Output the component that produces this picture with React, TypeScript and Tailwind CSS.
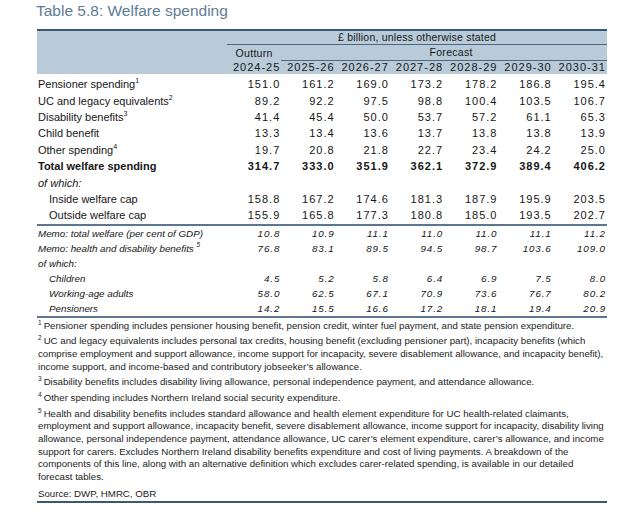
import React from "react";

type Row = { label: string; sup?: string; vals: string[]; bold?: boolean; indent?: boolean; italic?: boolean };

const main: Row[] = [
  { label: "Pensioner spending", sup: "1", vals: ["151.0", "161.2", "169.0", "173.2", "178.2", "186.8", "195.4"] },
  { label: "UC and legacy equivalents", sup: "2", vals: ["89.2", "92.2", "97.5", "98.8", "100.4", "103.5", "106.7"] },
  { label: "Disability benefits", sup: "3", vals: ["41.4", "45.4", "50.0", "53.7", "57.2", "61.1", "65.3"] },
  { label: "Child benefit", vals: ["13.3", "13.4", "13.6", "13.7", "13.8", "13.8", "13.9"] },
  { label: "Other spending", sup: "4", vals: ["19.7", "20.8", "21.8", "22.7", "23.4", "24.2", "25.0"] },
  { label: "Total welfare spending", bold: true, vals: ["314.7", "333.0", "351.9", "362.1", "372.9", "389.4", "406.2"] },
  { label: "of which:", italic: true, vals: [] },
  { label: "Inside welfare cap", indent: true, vals: ["158.8", "167.2", "174.6", "181.3", "187.9", "195.9", "203.5"] },
  { label: "Outside welfare cap", indent: true, vals: ["155.9", "165.8", "177.3", "180.8", "185.0", "193.5", "202.7"] },
];

const memo: Row[] = [
  { label: "Memo: total welfare (per cent of GDP)", vals: ["10.8", "10.9", "11.1", "11.0", "11.0", "11.1", "11.2"] },
  { label: "Memo: health and disability benefits ", sup: "5", vals: ["76.8", "83.1", "89.5", "94.5", "98.7", "103.6", "109.0"] },
  { label: "of which:", vals: [] },
  { label: "Children", indent: true, vals: ["4.5", "5.2", "5.8", "6.4", "6.9", "7.5", "8.0"] },
  { label: "Working-age adults", indent: true, vals: ["58.0", "62.5", "67.1", "70.9", "73.6", "76.7", "80.2"] },
  { label: "Pensioners", indent: true, vals: ["14.2", "15.5", "16.6", "17.2", "18.1", "19.4", "20.9"] },
];

const years = ["2024-25", "2025-26", "2026-27", "2027-28", "2028-29", "2029-30", "2030-31"];

const grid = "grid grid-cols-[190px_repeat(7,minmax(0,1fr))]";

function Fn({ n, lines }: { n: string; lines: string[] }) {
  return (
    <div className="mb-[3px]">
      {lines.map((l, i) => (
        <div key={i} className="whitespace-nowrap h-[12.7px] leading-[12.7px]">
          {i === 0 && <sup className="text-[6.5px] top-[-0.6em] mr-[2px]">{n}</sup>}
          {l}
        </div>
      ))}
    </div>
  );
}

export default function App() {
  return (
    <div className="w-[634px] h-[517px] bg-white overflow-hidden font-['Liberation_Sans',Arial,sans-serif] text-[#161616]">
      <div className="pl-[36px] pt-[1px] h-[29px] text-[15.5px] leading-[20px] text-[#5f7c95]">Table 5.8: Welfare spending</div>
      <div className="ml-[37px] w-[570px]">
        {/* header */}
        <div className="border-t-2 border-[#3b5871] bg-[#b9cad8]">
          <div className={grid}>
            <div />
            <div className="col-span-7 h-[14px] border-b border-[#4b6883] text-center text-[10.5px] leading-[13px] tracking-[0.2px]">
              £ billion, unless otherwise stated
            </div>
          </div>
          <div className={grid}>
            <div />
            <div className="h-[16px] text-center text-[10.5px] leading-[16px] tracking-[0.3px]">Outturn</div>
            <div className="col-span-6 h-[16px] border-b border-[#4b6883] text-center text-[10.5px] leading-[15px] pl-[14px] tracking-[0.3px]">
              Forecast
            </div>
          </div>
          <div className={grid}>
            <div />
            {years.map((y) => (
              <div key={y} className="h-[13px] text-right text-[11px] leading-[12px] tracking-[1px] pr-[1px]">
                {y}
              </div>
            ))}
          </div>
        </div>
        {/* main body */}
        <div className="pt-[2px]">
          {main.map((r, i) => (
            <div key={i} className={`${grid} h-[16.4px] items-center text-[11px] leading-[16px] ${r.bold ? "font-bold" : ""}`}>
              <div className={`${r.indent ? "pl-[12px]" : "pl-[1px]"} ${r.italic ? "italic" : ""} whitespace-nowrap`}>
                {r.label}
                {r.sup && <sup className="text-[7px] top-[-0.7em]">{r.sup}</sup>}
              </div>
              {r.vals.map((v, j) => (
                <div key={j} className="text-right tracking-[1px] pr-[1px]">
                  {v}
                </div>
              ))}
            </div>
          ))}
        </div>
        <div className="h-[2px] bg-[#5a7690]" />
        {/* memo */}
        <div>
          {memo.map((r, i) => (
            <div key={i} className={`${grid} h-[15px] items-center text-[9.8px] leading-[15px] italic`}>
              <div className={`${r.indent ? "pl-[12px]" : "pl-[1px]"} whitespace-nowrap`}>
                {r.label}
                {r.sup && <sup className="text-[6.5px] top-[-0.7em]">{r.sup}</sup>}
              </div>
              {r.vals.map((v, j) => (
                <div key={j} className="text-right tracking-[0.9px] pr-[1px]">
                  {v}
                </div>
              ))}
            </div>
          ))}
        </div>
        <div className="h-[2px] bg-[#5a7690]" />
        {/* footnotes */}
        <div className="pt-[2px] pl-[1px] text-[9.7px] text-[#1c1c1c]">
          <Fn n="1" lines={["Pensioner spending includes pensioner housing benefit, pension credit, winter fuel payment, and state pension expenditure."]} />
          <Fn
            n="2"
            lines={[
              "UC and legacy equivalents includes personal tax credits, housing benefit (excluding pensioner part), incapacity benefits (which",
              "comprise employment and support allowance, income support for incapacity, severe disablement allowance, and incapacity benefit),",
              "income support, and income-based and contributory jobseeker’s allowance.",
            ]}
          />
          <Fn n="3" lines={["Disability benefits includes disability living allowance, personal independence payment, and attendance allowance."]} />
          <Fn n="4" lines={["Other spending includes Northern Ireland social security expenditure."]} />
          <Fn
            n="5"
            lines={[
              "Health and disability benefits includes standard allowance and health element expenditure for UC health-related claimants,",
              "employment and support allowance, incapacity benefit, severe disablement allowance, income support for incapacity, disability living",
              "allowance, personal independence payment,  attendance allowance, UC carer’s element expenditure, carer’s allowance, and income",
              "support for carers. Excludes Northern Ireland disability benefits expenditure and cost of living payments. A breakdown of the",
              "components of this line, along with an alternative definition which excludes carer-related spending, is available in our detailed",
              "forecast tables.",
            ]}
          />
          <div className="h-[14px] leading-[14px]">Source: DWP, HMRC, OBR</div>
        </div>
        <div className="h-[2px] bg-[#3b5871]" />
      </div>
    </div>
  );
}
